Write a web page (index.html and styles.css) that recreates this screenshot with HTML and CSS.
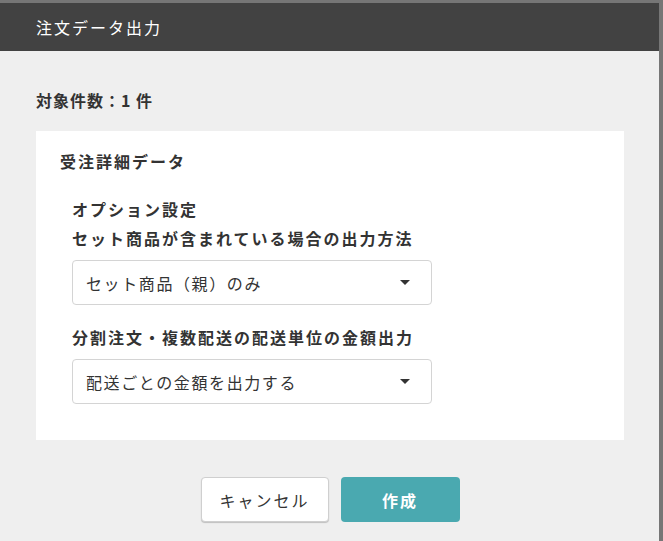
FILE: index.html
```html
<!DOCTYPE html>
<html lang="ja">
<head>
  <meta charset="UTF-8">
  <meta name="viewport" content="width=device-width, initial-scale=1.0">
  <title>注文データ出力</title>
  <link rel="stylesheet" href="styles.css">
</head>
<body>
  <div class="dialog">
    <div class="dialog-header">注文データ出力</div>
    <div class="dialog-body">
      <p class="count">対象件数：1 件</p>

      <div class="card">
        <h2 class="card-title">受注詳細データ</h2>
        <div class="options">
          <div class="label">オプション設定</div>
          <div class="label">セット商品が含まれている場合の出力方法</div>
          <div class="select">
            <span>セット商品（親）のみ</span>
            <span class="caret"></span>
          </div>

          <div class="label label-gap">分割注文・複数配送の配送単位の金額出力</div>
          <div class="select">
            <span>配送ごとの金額を出力する</span>
            <span class="caret"></span>
          </div>
        </div>
      </div>

      <div class="actions">
        <button class="btn btn-cancel">キャンセル</button>
        <button class="btn btn-primary">作成</button>
      </div>
    </div>
  </div>
</body>
</html>
```

FILE: styles.css
```css
html, body {
  margin: 0;
  padding: 0;
  height: 100%;
}
body {
  background-color: #767676;
  font-family: "Noto Sans CJK JP", "Noto Sans", sans-serif;
  color: #333;
  padding-top: 3px;
  box-sizing: border-box;
  overflow: hidden;
}
.dialog {
  width: 659px;
  height: 560px;
  background-color: #efefef;
}
.dialog-header {
  height: 48px;
  line-height: 48px;
  background-color: #424242;
  color: #fff;
  font-size: 16px;
  letter-spacing: 2px;
  padding-left: 36px;
}
.dialog-body {
  padding: 37px 35px 0 36px;
}
.count {
  margin: 0;
  font-size: 16px;
  line-height: 24px;
  font-weight: bold;
  letter-spacing: 1px;
}
.card {
  margin-top: 19px;
  width: 588px;
  height: 309px;
  box-sizing: border-box;
  background-color: #fff;
  padding: 18px 24px 0 24px;
}
.card-title {
  margin: 0;
  font-size: 16px;
  line-height: 24px;
  font-weight: bold;
  letter-spacing: 2px;
}
.options {
  margin-top: 22px;
  padding-left: 12px;
}
.label {
  font-size: 16px;
  line-height: 29px;
  font-weight: bold;
  letter-spacing: 2px;
}
.label-gap {
  margin-top: 18px;
}
.select {
  margin-top: 7px;
  width: 360px;
  height: 45px;
  box-sizing: border-box;
  border: 1px solid #d4d4d4;
  border-radius: 4px;
  background-color: #fff;
  display: flex;
  align-items: center;
  justify-content: space-between;
  padding: 0 21px 0 13px;
  font-size: 16px;
  letter-spacing: 1.6px;
}
.caret {
  width: 0;
  height: 0;
  border-left: 5px solid transparent;
  border-right: 5px solid transparent;
  border-top: 5px solid #333;
}
.actions {
  margin-top: 37px;
  display: flex;
  justify-content: center;
  gap: 12px;
}
.btn {
  height: 45px;
  border-radius: 4px;
  font-family: inherit;
  font-size: 16px;
  letter-spacing: 2px;
  cursor: pointer;
}
.btn-cancel {
  width: 128px;
  background-color: #fff;
  color: #333;
  border: 1px solid #cfcfcf;
  box-shadow: 0 1px 1px rgba(0, 0, 0, 0.2);
}
.btn-primary {
  width: 119px;
  background-color: #4aa9b0;
  color: #fff;
  border: none;
  font-weight: bold;
}
```
